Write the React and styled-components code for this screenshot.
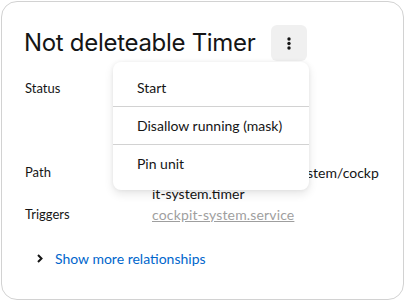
import React from "react";
import styled, { createGlobalStyle } from "styled-components";

const GlobalStyle = createGlobalStyle`
  html, body {
    margin: 0;
    padding: 0;
    background: #ffffff;
  }
  body {
    font-family: "Lato", "Noto Sans", sans-serif;
    color: #151515;
  }
`;

const Page = styled.div`
  padding: 1px 0 0 1px;
`;

const Card = styled.div`
  position: relative;
  box-sizing: border-box;
  width: 403px;
  height: 299px;
  border: 1px solid #d2d2d2;
  border-radius: 16px;
  padding: 23px 23px 0 23px;
  background: #fff;
`;

const Header = styled.div`
  display: flex;
  align-items: center;
  gap: 15px;
`;

const Title = styled.h1`
  margin: 0 0 0 -1px;
  font-family: "Inter", "Noto Sans", sans-serif;
  font-size: 24px;
  font-weight: 400;
  letter-spacing: -0.3px;
  line-height: 36px;
`;

const KebabButton = styled.button`
  width: 36px;
  height: 36px;
  border: none;
  border-radius: 6px;
  background: #f0f0f0;
  display: flex;
  align-items: center;
  justify-content: center;
  padding: 0;
`;

const List = styled.dl`
  display: grid;
  grid-template-columns: 127px 1fr;
  margin: 17px 0 0 0;
  line-height: 21px;
`;

const Term = styled.dt`
  font-size: 13px;
  color: #151515;
`;

const Value = styled.dd`
  margin: 0;
  font-size: 14px;
  word-break: break-all;
  min-height: ${(p) => p.$lines * 21}px;
`;

const MutedLink = styled.a`
  color: #9f9f9f;
  text-decoration: underline;
  letter-spacing: 0.15px;
`;

const Expander = styled.div`
  display: flex;
  align-items: center;
  gap: 12px;
  margin: 23px 0 0 12px;
  font-size: 14px;
  line-height: 21px;
  color: #0066cc;
`;

const Menu = styled.div`
  position: absolute;
  left: 111px;
  top: 60px;
  width: 196px;
  box-sizing: border-box;
  padding: 7px 0 8px;
  background: #fff;
  border-radius: 8px;
  box-shadow: 0 4px 10px rgba(3, 3, 3, 0.1), 0 0 4px rgba(3, 3, 3, 0.06);
`;

const MenuItem = styled.div`
  height: 37px;
  display: flex;
  align-items: center;
  padding-left: 24px;
  font-size: 14px;
  color: #151515;
`;

const Separator = styled.div`
  height: 1px;
  background: #d2d2d2;
`;

const Dots = () => (
  <svg width="4" height="13" viewBox="0 0 4 13">
    <circle cx="2" cy="2" r="1.7" fill="#151515" />
    <circle cx="2" cy="6.5" r="1.7" fill="#151515" />
    <circle cx="2" cy="11" r="1.7" fill="#151515" />
  </svg>
);

const Chevron = () => (
  <svg width="6" height="9" viewBox="0 0 6 9">
    <polyline points="1,1 4.5,4.5 1,8" fill="none" stroke="#151515" strokeWidth="2" />
  </svg>
);

export default function App() {
  return (
    <Page>
      <GlobalStyle />
      <Card>
        <Header>
          <Title>Not deleteable Timer</Title>
          <KebabButton aria-label="Actions">
            <Dots />
          </KebabButton>
        </Header>
        <List>
          <Term>Status</Term>
          <Value $lines={4} />
          <Term>Path</Term>
          <Value $lines={2}>/usr/local/lib/systemd/system/cockpit-system.timer</Value>
          <Term>Triggers</Term>
          <Value $lines={1}>
            <MutedLink>cockpit-system.service</MutedLink>
          </Value>
        </List>
        <Expander>
          <Chevron />
          <span>Show more relationships</span>
        </Expander>
        <Menu>
          <MenuItem>Start</MenuItem>
          <Separator />
          <MenuItem>Disallow running (mask)</MenuItem>
          <Separator />
          <MenuItem>Pin unit</MenuItem>
        </Menu>
      </Card>
    </Page>
  );
}
